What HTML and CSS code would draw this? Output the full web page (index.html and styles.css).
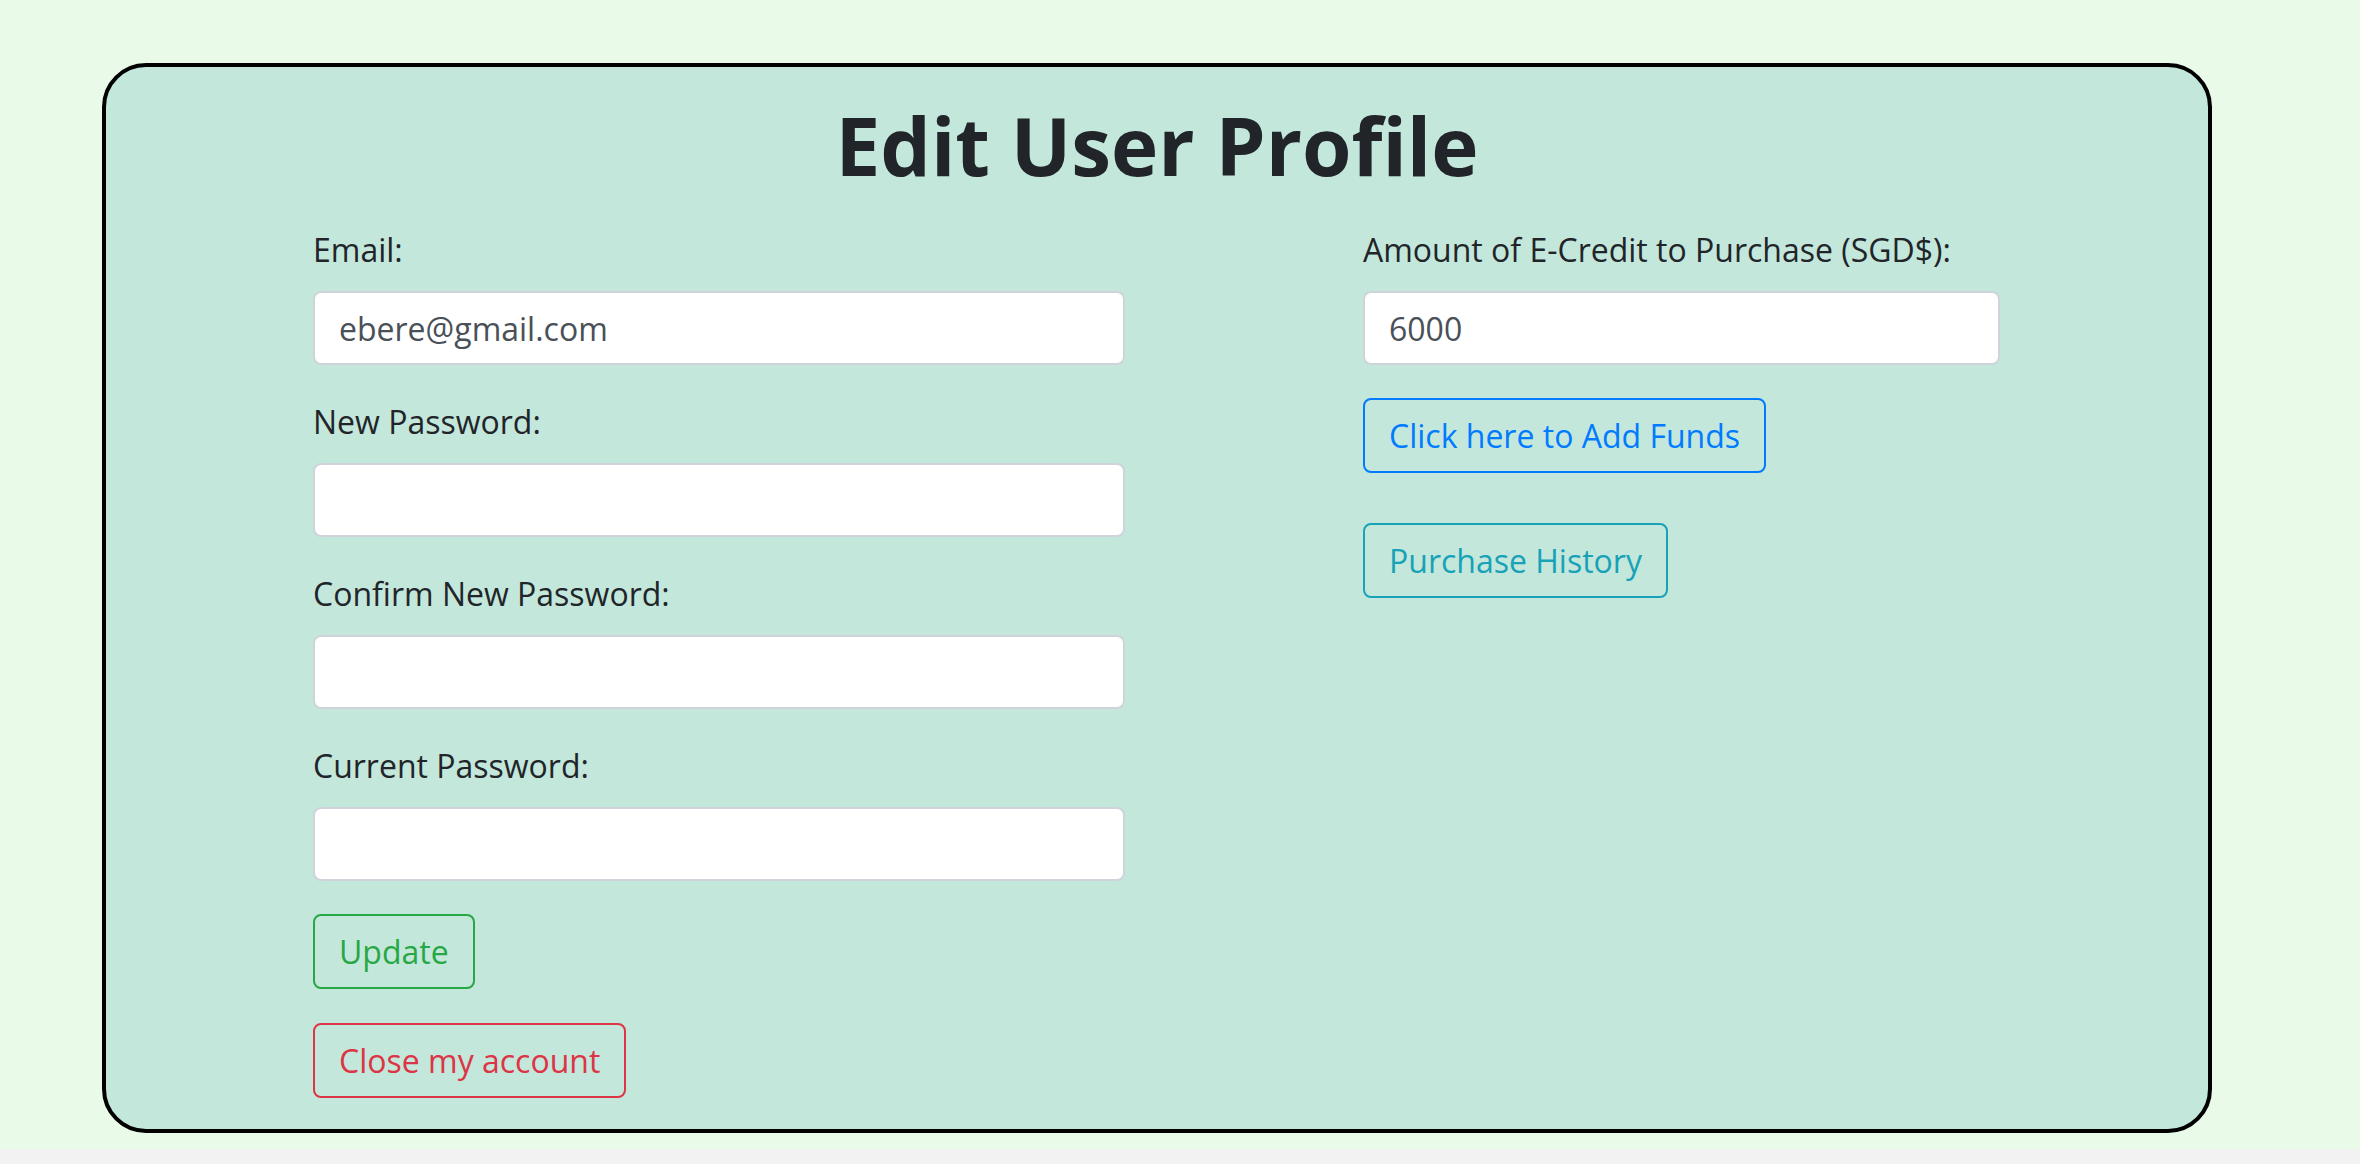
FILE: index.html
```html
<!DOCTYPE html>
<html lang="en">
<head>
<meta charset="utf-8">
<title>Edit User Profile</title>
<link rel="stylesheet" href="styles.css">
</head>
<body>
<div class="page">
  <div class="card">
    <h1 class="title">Edit User Profile</h1>
    <div class="columns">
      <form class="col col-left">
        <div class="form-group">
          <label class="label" for="email">Email:</label>
          <input class="input" id="email" type="email" value="ebere@gmail.com">
        </div>
        <div class="form-group">
          <label class="label" for="newpw">New Password:</label>
          <input class="input" id="newpw" type="password">
        </div>
        <div class="form-group">
          <label class="label" for="confirmpw">Confirm New Password:</label>
          <input class="input" id="confirmpw" type="password">
        </div>
        <div class="form-group">
          <label class="label" for="currentpw">Current Password:</label>
          <input class="input" id="currentpw" type="password">
        </div>
        <div class="btn-row btn-row-tight">
          <button type="button" class="btn btn-success">Update</button>
        </div>
        <div class="btn-row">
          <button type="button" class="btn btn-danger">Close my account</button>
        </div>
      </form>
      <form class="col col-right">
        <div class="form-group">
          <label class="label" for="amount">Amount of E-Credit to Purchase (SGD$):</label>
          <input class="input" id="amount" type="text" value="6000">
        </div>
        <div class="btn-row btn-row-wide">
          <button type="button" class="btn btn-primary">Click here to Add Funds</button>
        </div>
        <div class="btn-row">
          <button type="button" class="btn btn-info">Purchase History</button>
        </div>
      </form>
    </div>
  </div>
</div>
</body>
</html>
```

FILE: styles.css
```css
html {
  background: #f2f2f2;
}

body {
  margin: 0;
  font-family: "Open Sans", "Noto Sans", "Liberation Sans", sans-serif;
  color: #212529;
}

.page {
  background: #e9fbe8;
  padding: 63px 0 16px 102px;
}

.card {
  box-sizing: border-box;
  width: 2110px;
  background: #c4e7db;
  border: 4px solid #000;
  border-radius: 44px;
  padding: 30px 0 31px;
}

.title {
  margin: 0 0 33px;
  text-align: center;
  font-size: 80px;
  line-height: 96px;
  font-weight: 700;
  color: #212529;
}

.columns {
  display: flex;
  padding-left: 207px;
  gap: 238px;
}

.col {
  margin: 0;
}

.col-left {
  width: 812px;
}

.col-right {
  width: 637px;
}

.form-group {
  margin-bottom: 33px;
}

.label {
  display: block;
  font-size: 32px;
  line-height: 48px;
  margin-bottom: 17px;
  color: #212529;
}

.input {
  display: block;
  box-sizing: border-box;
  width: 100%;
  height: 74px;
  margin: 0;
  padding: 0 24px;
  font-family: inherit;
  font-size: 32px;
  color: #495057;
  background: #fff;
  border: 2px solid #ced4da;
  border-radius: 8px;
  outline: none;
}

.btn-row-tight {
  margin-bottom: 34px;
}

.btn-row-wide {
  margin-bottom: 50px;
}

.btn {
  display: inline-block;
  box-sizing: border-box;
  height: 75px;
  margin: 0;
  padding: 0 24px;
  font-family: inherit;
  font-size: 32px;
  line-height: 71px;
  background: transparent;
  border: 2px solid;
  border-radius: 8px;
  cursor: pointer;
}

.btn-success {
  color: #28a745;
  border-color: #28a745;
}

.btn-danger {
  color: #dc3545;
  border-color: #dc3545;
}

.btn-primary {
  color: #007bff;
  border-color: #007bff;
}

.btn-info {
  color: #17a2b8;
  border-color: #17a2b8;
}
```
